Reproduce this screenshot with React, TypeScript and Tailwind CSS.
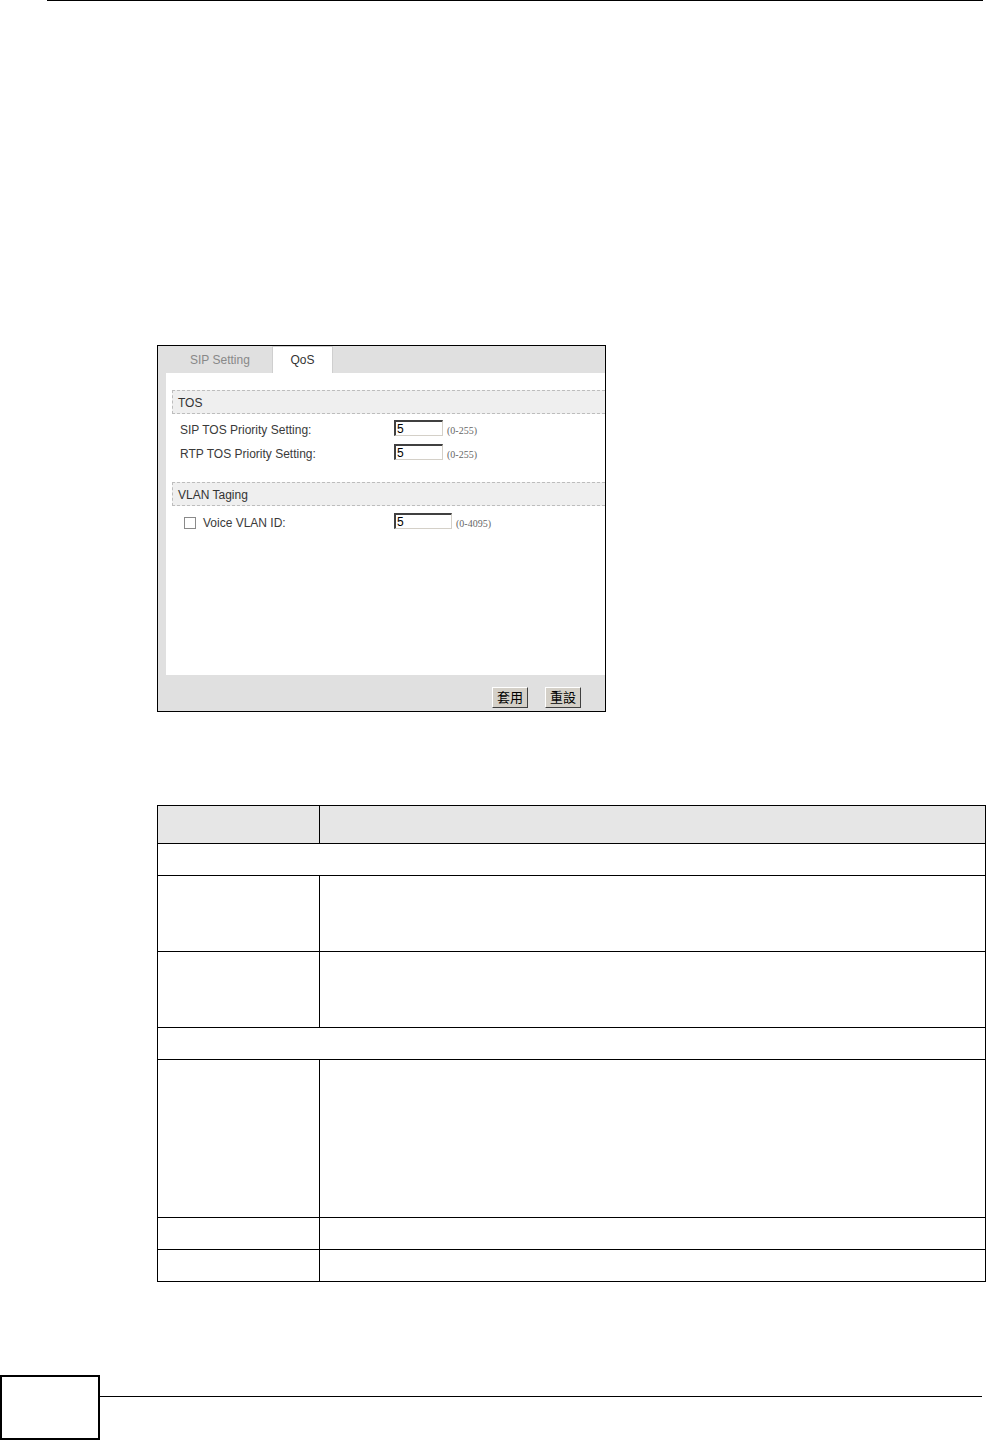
import React from "react";

const ui = { fontFamily: '"Liberation Sans", Arial, sans-serif' };
const cjk = { fontFamily: '"Noto Sans CJK TC", "Noto Sans CJK SC", sans-serif' };
const hint = { fontFamily: '"Liberation Serif", "Times New Roman", serif' };

function SectionHeader({ label }: { label: string }) {
  return (
    <div className="ml-[6px] flex h-[24px] items-center border border-r-0 border-dashed border-[#bdbdbd] bg-[#efefef] pl-[5px] pt-[1px] text-[12px] text-[#333]">
      {label}
    </div>
  );
}

function TextField({ value, width }: { value: string; width: string }) {
  return (
    <div
      className={`flex h-[16px] items-center border-t-2 border-l-2 border-r border-b border-t-[#404040] border-l-[#404040] border-r-[#d4d0c8] border-b-[#d4d0c8] bg-white pl-[1px] text-[12px] leading-none text-black ${width}`}
    >
      {value}
    </div>
  );
}

function FieldRow({
  label,
  value,
  range,
  width,
  checkbox,
  className,
}: {
  label: string;
  value: string;
  range: string;
  width: string;
  checkbox?: boolean;
  className: string;
}) {
  return (
    <div className={`flex h-[16px] items-center ${className}`}>
      <div className="flex w-[228px] items-center pt-[3px] text-[12px] text-[#3a3a3a]">
        {checkbox ? (
          <>
            <span className="ml-[18px] h-[12px] w-[12px] border border-[#8a8a8a] bg-white" />
            <span className="ml-[7px]">{label}</span>
          </>
        ) : (
          <span className="ml-[14px]">{label}</span>
        )}
      </div>
      <TextField value={value} width={width} />
      <span className="ml-[4px] mt-[5px] text-[10px] text-[#666]" style={hint}>
        {range}
      </span>
    </div>
  );
}

function PanelButton({ label }: { label: string }) {
  return (
    <button
      className="flex h-[21px] w-[36px] items-center justify-center border border-t-white border-l-white border-r-[#404040] border-b-[#404040] bg-[#d4d0c8] pb-[2px] text-[13px] leading-[15px] text-black"
      style={cjk}
    >
      {label}
    </button>
  );
}

function QosPanel() {
  return (
    <div className="ml-[157px] w-[449px] border border-black bg-[#e0e0e0]" style={ui}>
      <div className="flex h-[27px] items-end">
        <div className="flex h-[26px] w-[114px] items-center pl-[32px] text-[12px] text-[#888]">
          SIP Setting
        </div>
        <div className="flex h-[27px] w-[61px] items-center justify-center border border-b-0 border-[#cfcfcf] bg-white text-[12px] text-[#333]">
          QoS
        </div>
      </div>
      <div className="ml-[8px] h-[302px] bg-white pt-[17px]">
        <SectionHeader label="TOS" />
        <FieldRow className="mt-[6px]" label="SIP TOS Priority Setting:" value="5" range="(0-255)" width="w-[49px]" />
        <FieldRow className="mt-[8px]" label="RTP TOS Priority Setting:" value="5" range="(0-255)" width="w-[49px]" />
        <div className="mt-[22px]">
          <SectionHeader label="VLAN Taging" />
        </div>
        <FieldRow
          className="mt-[7px]"
          label="Voice VLAN ID:"
          value="5"
          range="(0-4095)"
          width="w-[58px]"
          checkbox
        />
      </div>
      <div className="flex h-[36px] items-start justify-end gap-[17px] pr-[24px] pt-[12px]">
        <PanelButton label="套用" />
        <PanelButton label="重設" />
      </div>
    </div>
  );
}

const rows: { h: string; span?: boolean }[] = [
  { h: "h-[32px]", span: true },
  { h: "h-[76px]" },
  { h: "h-[76px]" },
  { h: "h-[32px]", span: true },
  { h: "h-[158px]" },
  { h: "h-[32px]" },
  { h: "h-[32px]" },
];

function FieldTable() {
  return (
    <div className="ml-[157px] mt-[93px] w-[829px] border-l border-t border-black">
      <div className="flex h-[38px] bg-[#e6e6e6]">
        <div className="w-[162px] border-b border-r border-black" />
        <div className="flex-1 border-b border-r border-black" />
      </div>
      {rows.map((row, i) =>
        row.span ? (
          <div key={i} className={`${row.h} border-b border-r border-black`} />
        ) : (
          <div key={i} className={`flex ${row.h}`}>
            <div className="w-[162px] border-b border-r border-black" />
            <div className="flex-1 border-b border-r border-black" />
          </div>
        )
      )}
    </div>
  );
}

export default function App() {
  return (
    <div className="flex h-[1440px] w-[986px] flex-col bg-white">
      <div className="ml-[47px] mr-[3px] h-px bg-black" />
      <div className="mt-[344px]">
        <QosPanel />
      </div>
      <FieldTable />
      <div className="mt-auto flex items-start">
        <div className="h-[65px] w-[100px] border-2 border-black" />
        <div className="mr-[4px] mt-[21px] h-px flex-1 bg-black" />
      </div>
    </div>
  );
}
